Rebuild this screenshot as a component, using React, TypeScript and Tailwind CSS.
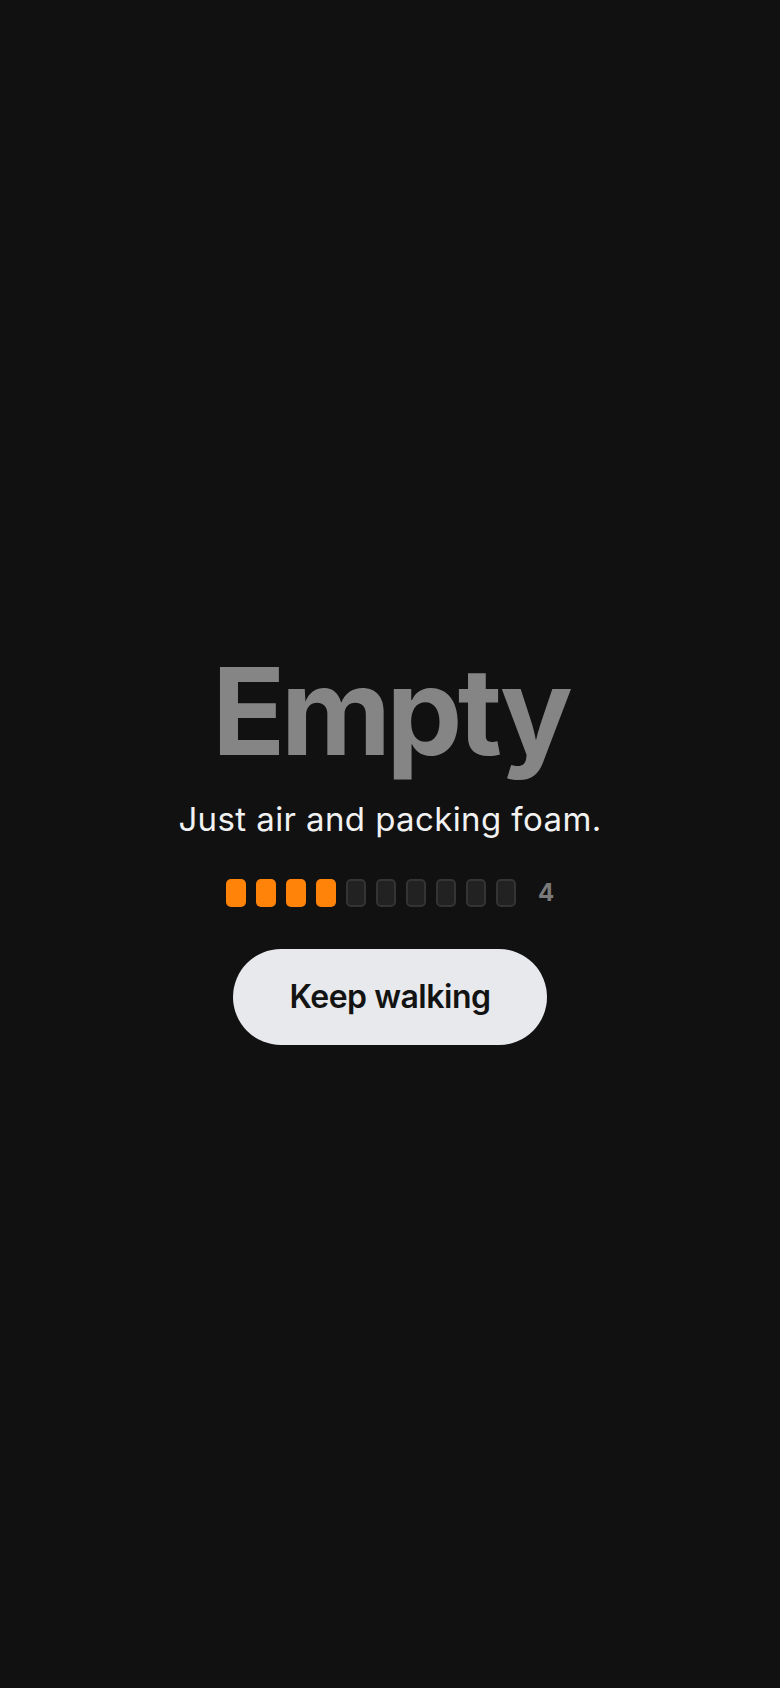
export default function App() {
  const filled = 4;
  const total = 10;

  return (
    <div
      className="flex h-[1688px] w-full flex-col items-center justify-center bg-[#111111]"
      style={{ fontFamily: 'Inter, "Noto Sans", sans-serif' }}
    >
      <div className="flex flex-col items-center pt-[8px]">
        {/* Title */}
        <h1 className="text-[121px] font-bold leading-none tracking-[-0.04em] text-[#858585]">
          Empty
        </h1>
        <p className="mt-[27px] text-[33px] leading-tight tracking-[0.012em] text-[#f2f2f2]">
          Just air and packing foam.
        </p>

        {/* Progress */}
        <div className="mt-[35px] flex items-center">
          <div className="flex gap-[10px]">
            {Array.from({ length: total }).map((_, i) =>
              i < filled ? (
                <div key={i} className="h-[28px] w-[20px] rounded-[5px] bg-[#ff8308]" />
              ) : (
                <div
                  key={i}
                  className="h-[28px] w-[20px] rounded-[5px] border-2 border-[#343434] bg-[#222222]"
                />
              )
            )}
          </div>
          <span className="ml-[22px] text-[24px] font-bold text-[#7a7a7a]">{filled}</span>
        </div>

        {/* Action */}
        <button className="mt-[38px] flex h-[96px] w-[314px] items-center justify-center rounded-full bg-[#e8e9ec] text-[32px] font-semibold tracking-[-0.015em] text-[#131313]">
          Keep walking
        </button>
      </div>
    </div>
  );
}
